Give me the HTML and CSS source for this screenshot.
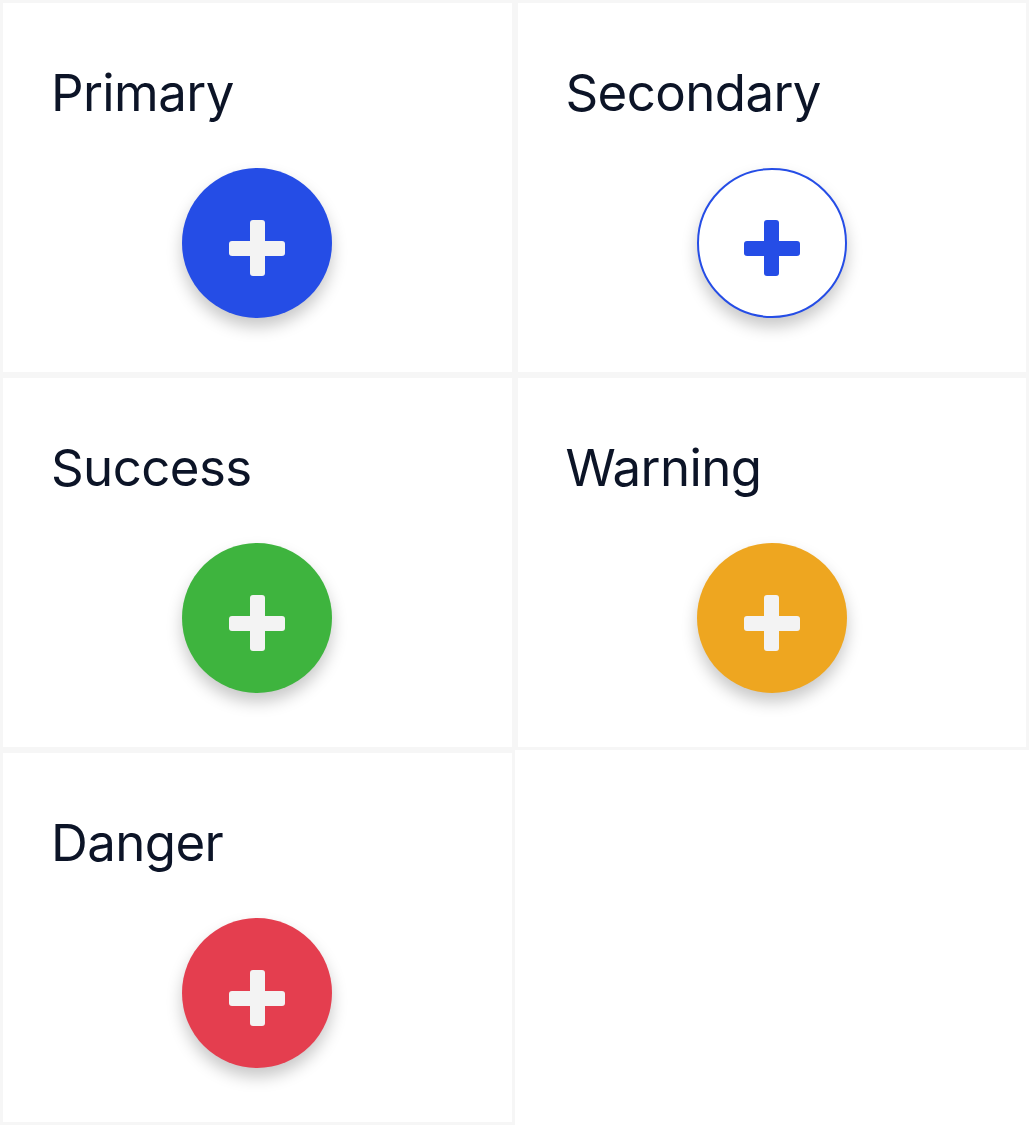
FILE: index.html
```html
<!DOCTYPE html>
<html>
<head>
<meta charset="utf-8">
<link rel="stylesheet" href="styles.css">
</head>
<body>
<div class="grid">
  <div class="cell">
    <h2 class="title">Primary</h2>
    <div class="holder"><button class="fab fab-primary"><span class="plus"></span></button></div>
  </div>
  <div class="cell">
    <h2 class="title">Secondary</h2>
    <div class="holder"><button class="fab fab-secondary"><span class="plus"></span></button></div>
  </div>
  <div class="cell">
    <h2 class="title">Success</h2>
    <div class="holder"><button class="fab fab-success"><span class="plus"></span></button></div>
  </div>
  <div class="cell">
    <h2 class="title">Warning</h2>
    <div class="holder"><button class="fab fab-warning"><span class="plus"></span></button></div>
  </div>
  <div class="cell">
    <h2 class="title">Danger</h2>
    <div class="holder"><button class="fab fab-danger"><span class="plus"></span></button></div>
  </div>
</div>
</body>
</html>
```

FILE: styles.css
```css
html, body {
  margin: 0;
  padding: 0;
  background: #ffffff;
}
.grid {
  display: grid;
  grid-template-columns: 1fr 1fr;
  grid-auto-rows: 375px;
}
.cell {
  border: 3px solid #f6f6f6;
  padding: 0 48px;
  box-sizing: border-box;
  display: flex;
  flex-direction: column;
}
.title {
  margin: 62px 0 0 0;
  font-family: Inter, "Noto Sans", sans-serif;
  font-weight: 400;
  font-size: 51px;
  line-height: 56px;
  color: #0c1427;
  letter-spacing: -0.6px;
}
.holder {
  display: flex;
  justify-content: center;
  margin-top: 47px;
}
.fab {
  width: 150px;
  height: 150px;
  border-radius: 50%;
  border: none;
  padding: 0;
  display: flex;
  align-items: center;
  justify-content: center;
  box-shadow: 0 9px 16px rgba(0, 0, 0, 0.22);
  cursor: pointer;
}
.fab-primary { background: #254de6; }
.fab-secondary { background: #ffffff; border: 2.5px solid #254de6; }
.fab-success { background: #3eb43e; }
.fab-warning { background: #eea620; }
.fab-danger { background: #e43e4f; }
.plus {
  position: relative;
  width: 56px;
  height: 56px;
  margin-top: 10px;
}
.plus::before,
.plus::after {
  content: "";
  position: absolute;
  background: #f3f3f3;
  border-radius: 3px;
}
.plus::before {
  left: 0;
  top: 20.5px;
  width: 56px;
  height: 15px;
}
.plus::after {
  left: 20.5px;
  top: 0;
  width: 15px;
  height: 56px;
}
.fab-secondary .plus::before,
.fab-secondary .plus::after {
  background: #254de6;
}
```
